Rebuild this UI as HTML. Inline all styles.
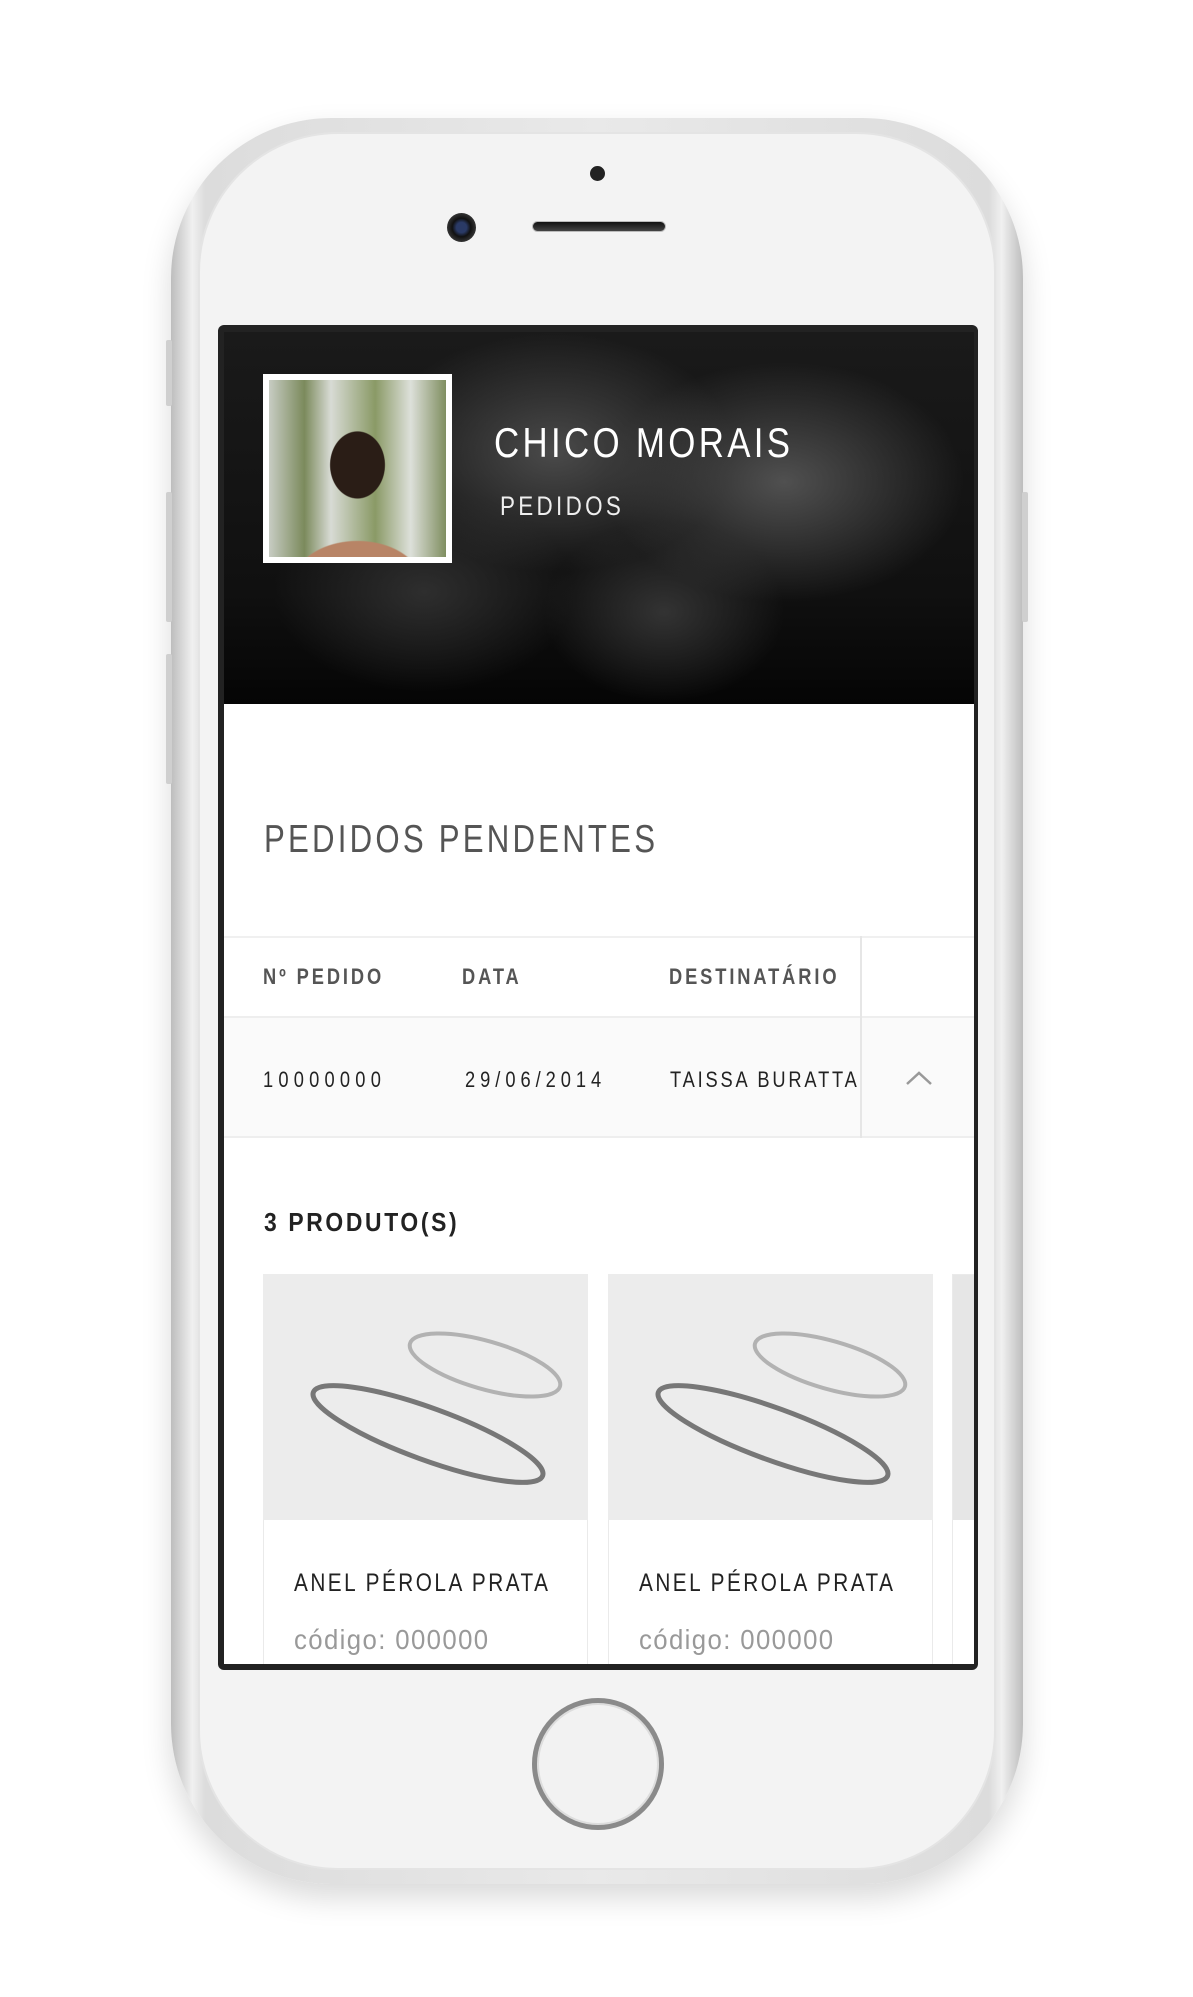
<!DOCTYPE html>
<html><head><meta charset="utf-8"><style>
*{margin:0;padding:0;box-sizing:border-box}
body{width:1193px;height:1997px;background:#fff;position:relative;overflow:hidden;font-family:"Liberation Sans",sans-serif}
.abs{position:absolute}
.body{left:171px;top:118px;width:852px;height:1766px;border-radius:160px;background:linear-gradient(90deg,#bdbdbd,#f0f0f0 2.5%,#dcdcdc 4%,#e9e9e9 50%,#dcdcdc 96%,#f0f0f0 97.5%,#bdbdbd);box-shadow:0 14px 30px rgba(0,0,0,.15)}
.face{left:198px;top:132px;width:798px;height:1738px;border-radius:140px;background:#f3f3f3;border:2px solid #e4e4e4}
.btn{background:#cfcfcf;border-radius:2px}
.screen{left:218px;top:325px;width:760px;height:1345px;background:#222;border-radius:6px}
.in{left:224px;top:332px;width:750px;height:1332px;background:#fff;overflow:hidden}
.hdr{left:0;top:0;width:750px;height:372px;background:radial-gradient(ellipse 180px 120px at 330px 120px,#4a4a4a,transparent),radial-gradient(ellipse 180px 120px at 560px 150px,#505050,transparent),radial-gradient(ellipse 150px 100px at 200px 260px,#2e2e2e,transparent),radial-gradient(ellipse 120px 90px at 440px 280px,#333,transparent),linear-gradient(#1a1a1a,#101010 70%,#050505)}
.t{white-space:nowrap;transform-origin:0 50%;transform:scaleX(.83)}
</style></head><body>
<div class="abs body"></div>
<div class="abs face"></div>
<div class="abs btn" style="left:166px;top:340px;width:6px;height:66px"></div>
<div class="abs btn" style="left:166px;top:492px;width:6px;height:130px"></div>
<div class="abs btn" style="left:166px;top:654px;width:6px;height:130px"></div>
<div class="abs btn" style="left:1022px;top:492px;width:6px;height:130px"></div>
<div class="abs" style="left:590px;top:166px;width:15px;height:15px;border-radius:50%;background:#222"></div>
<div class="abs" style="left:447px;top:213px;width:29px;height:29px;border-radius:50%;background:radial-gradient(circle,#2a3a66 25%,#111 45%,#333 70%,#ccc 100%)"></div>
<div class="abs" style="left:532px;top:221px;width:134px;height:11px;border-radius:6px;background:linear-gradient(#111,#444);border:1px solid #bbb"></div>
<div class="abs" style="left:532px;top:1698px;width:132px;height:132px;border-radius:50%;border:5px solid #8a8a8a;background:#f2f2f2;box-shadow:inset 0 0 0 2px #ddd"></div>
<div class="abs screen"></div>
<div class="abs in">
 <div class="abs hdr"></div>
 <div class="abs" style="left:39px;top:42px;width:189px;height:189px;background:#fff;padding:6px">
  <div style="width:100%;height:100%;background:radial-gradient(ellipse 45px 55px at 50% 48%,#2a1d16 60%,transparent 62%),radial-gradient(ellipse 90px 60px at 50% 115%,#b88466 70%,transparent 72%),linear-gradient(90deg,#c7ccc3,#7b8a5c 20%,#d8dbd5 35%,#8a9a66 60%,#dde0da 80%,#7f8e60)"></div>
 </div>
 <div class="abs t" style="left:270px;top:86px;font-size:42px;color:#fff;letter-spacing:4px;line-height:50px">CHICO MORAIS</div>
 <div class="abs t" style="left:276px;top:159px;font-size:27px;color:#eee;letter-spacing:4px;line-height:30px">PEDIDOS</div>
 <div class="abs t" style="left:40px;top:486px;font-size:39px;color:#555;letter-spacing:4px;line-height:44px;transform:scaleX(.8)">PEDIDOS PENDENTES</div>
 <div class="abs" style="left:0;top:604px;width:750px;height:2px;background:#f0f0f0"></div>
 <div class="abs" style="left:0;top:684px;width:750px;height:122px;background:#fafafa;border-top:2px solid #eee;border-bottom:2px solid #eee"></div>
 <div class="abs" style="left:636px;top:604px;width:2px;height:202px;background:#e6e6e6"></div>
 <div class="abs t" style="left:39px;top:632px;font-size:22px;font-weight:bold;color:#555;letter-spacing:3.5px">Nº PEDIDO</div>
 <div class="abs t" style="left:238px;top:632px;font-size:22px;font-weight:bold;color:#555;letter-spacing:3.5px">DATA</div>
 <div class="abs t" style="left:445px;top:632px;font-size:22px;font-weight:bold;color:#555;letter-spacing:3.5px">DESTINATÁRIO</div>
 <div class="abs t" style="left:39px;top:735px;font-size:22px;color:#222;letter-spacing:6.3px">10000000</div>
 <div class="abs t" style="left:241px;top:735px;font-size:22px;color:#222;letter-spacing:6px">29/06/2014</div>
 <div class="abs t" style="left:446px;top:735px;font-size:22px;color:#222;letter-spacing:3.4px">TAISSA BURATTA</div>
 <svg class="abs" style="left:681px;top:738px" width="28" height="16"><path d="M2 14 L14 3 L26 14" fill="none" stroke="#999" stroke-width="2.5"/></svg>
 <div class="abs t" style="left:40px;top:875px;font-size:26px;font-weight:bold;color:#222;letter-spacing:3px;transform:scaleX(.88)">3 PRODUTO(S)</div>
 <div class="abs" style="left:39px;top:942px;width:325px;height:420px;border:1px solid #eaeaea"></div>
 <div class="abs" style="left:384px;top:942px;width:325px;height:420px;border:1px solid #eaeaea"></div>
 <div class="abs" style="left:728px;top:942px;width:30px;height:420px;border:1px solid #eaeaea"></div>
 <svg class="abs" style="left:39px;top:942px" width="325" height="246"><rect width="325" height="246" fill="#ececec"/><ellipse cx="222" cy="91" rx="78" ry="24" transform="rotate(16 222 91)" fill="none" stroke="#9a9a9a" stroke-width="4" opacity=".7"/><ellipse cx="165" cy="160" rx="122" ry="26" transform="rotate(20 165 160)" fill="none" stroke="#777" stroke-width="5"/></svg>
 <svg class="abs" style="left:384px;top:942px" width="325" height="246"><rect width="325" height="246" fill="#ececec"/><ellipse cx="222" cy="91" rx="78" ry="24" transform="rotate(16 222 91)" fill="none" stroke="#9a9a9a" stroke-width="4" opacity=".7"/><ellipse cx="165" cy="160" rx="122" ry="26" transform="rotate(20 165 160)" fill="none" stroke="#777" stroke-width="5"/></svg>
 <div class="abs" style="left:729px;top:943px;width:28px;height:245px;background:#e6e6e6"></div>
 <div class="abs t" style="left:70px;top:1237px;font-size:25px;color:#222;letter-spacing:3px">ANEL PÉROLA PRATA</div>
 <div class="abs t" style="left:415px;top:1237px;font-size:25px;color:#222;letter-spacing:3px">ANEL PÉROLA PRATA</div>
 <div class="abs t" style="left:70px;top:1292px;font-size:28px;color:#999;letter-spacing:1.5px;transform:scaleX(.92)">código: 000000</div>
 <div class="abs t" style="left:415px;top:1292px;font-size:28px;color:#999;letter-spacing:1.5px;transform:scaleX(.92)">código: 000000</div>
</div>
</body></html>
